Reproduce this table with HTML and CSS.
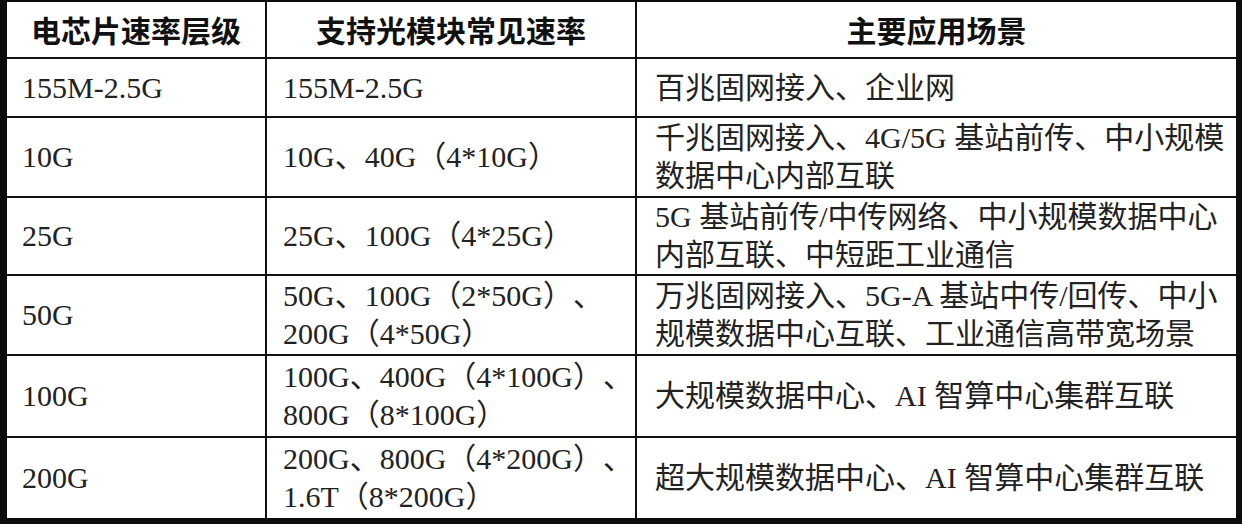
FILE: index.html
```html
<!DOCTYPE html>
<html lang="zh-CN">
<head>
<meta charset="utf-8">
<title>电芯片速率层级</title>
<link rel="stylesheet" href="styles.css">
</head>
<body>
<div class="frame">
  <div class="grid">
    <div class="cell head">电芯片速率层级</div>
    <div class="cell head">支持光模块常见速率</div>
    <div class="cell head">主要应用场景</div>

    <div class="cell c1">155M-2.5G</div>
    <div class="cell c2">155M-2.5G</div>
    <div class="cell c3">百兆固网接入、企业网</div>

    <div class="cell c1">10G</div>
    <div class="cell c2">10G、40G（4*10G）</div>
    <div class="cell c3">千兆固网接入、4G/5G 基站前传、中小规模<br>数据中心内部互联</div>

    <div class="cell c1">25G</div>
    <div class="cell c2">25G、100G（4*25G）</div>
    <div class="cell c3">5G 基站前传/中传网络、中小规模数据中心<br>内部互联、中短距工业通信</div>

    <div class="cell c1">50G</div>
    <div class="cell c2">50G、100G（2*50G）、<br>200G（4*50G）</div>
    <div class="cell c3">万兆固网接入、5G-A 基站中传/回传、中小<br>规模数据中心互联、工业通信高带宽场景</div>

    <div class="cell c1">100G</div>
    <div class="cell c2">100G、400G（4*100G）、<br>800G（8*100G）</div>
    <div class="cell c3">大规模数据中心、AI 智算中心集群互联</div>

    <div class="cell c1">200G</div>
    <div class="cell c2">200G、800G（4*200G）、<br>1.6T（8*200G）</div>
    <div class="cell c3">超大规模数据中心、AI 智算中心集群互联</div>
  </div>
</div>
</body>
</html>
```

FILE: styles.css
```css
html, body {
  margin: 0;
  padding: 0;
  background: #ffffff;
}

.frame {
  width: 1242px;
  height: 524px;
  box-sizing: border-box;
  border-style: solid;
  border-color: #0d0d0d;
  border-width: 2px 6px 6px 7px;
  background: #ffffff;
}

.grid {
  display: grid;
  grid-template-columns: 258px 368px 599px;
  grid-template-rows: 55px 57px 78px 76px 78px 80px 80px;
  gap: 2px;
  background: #111111;
  width: 1229px;
  height: 516px;
}

.cell {
  background: #ffffff;
  display: flex;
  align-items: center;
  white-space: nowrap;
  font-family: "Liberation Serif", "Noto Sans CJK SC", serif;
  font-size: 30px;
  line-height: 38px;
  color: #222222;
  text-spacing-trim: space-all;
  font-feature-settings: "halt" 0, "chws" 0;
}

.head {
  justify-content: center;
  font-family: "Noto Sans CJK SC", sans-serif;
  font-weight: 700;
  color: #111111;
  padding-bottom: 2px;
}

.c1 {
  padding-left: 15px;
}

.c2 {
  padding-left: 16px;
}

.c3 {
  padding-left: 18px;
}
```
